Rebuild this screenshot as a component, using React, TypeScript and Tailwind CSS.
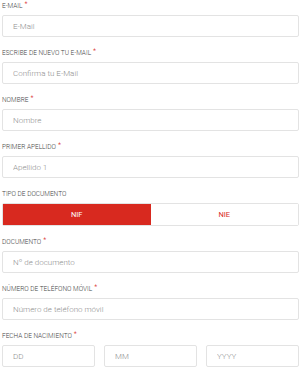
import React from "react";

const font = { fontFamily: "Roboto, 'Liberation Sans', sans-serif" };

function Label({ text, required = true }: { text: string; required?: boolean }) {
  return (
    <div className="flex h-[12px] items-center text-[6.5px] font-light uppercase leading-none text-[#444]">
      <span>{text}</span>
      {required && <span className="ml-[2px] -mt-[3px] text-[7px] text-[#d8291f]">*</span>}
    </div>
  );
}

function Input({ placeholder }: { placeholder: string }) {
  return (
    <input
      placeholder={placeholder}
      className="h-[22px] w-full min-w-0 rounded-[2px] border border-[#e3e3e3] bg-white pl-[10px] text-[8px] font-light text-[#333] outline-none placeholder:text-[#8f8f8f]"
      style={font}
    />
  );
}

function Field({ label, placeholder }: { label: string; placeholder: string }) {
  return (
    <div className="flex flex-col gap-[3px] pb-[10px]">
      <Label text={label} />
      <Input placeholder={placeholder} />
    </div>
  );
}

export default function App() {
  return (
    <div className="h-[374px] w-[300px] overflow-hidden bg-white pl-[2px] pr-[1px]" style={font}>
      <Field label="E-Mail" placeholder="E-Mail" />
      <Field label="Escribe de nuevo tu E-Mail" placeholder="Confirma tu E-Mail" />
      <Field label="Nombre" placeholder="Nombre" />
      <Field label="Primer apellido" placeholder="Apellido 1" />

      <div className="flex flex-col gap-[3px] pb-[10px]">
        <Label text="Tipo de documento" required={false} />
        <div className="grid h-[23px] grid-cols-2 rounded-[2px] border border-[#e3e3e3] text-[7.5px]">
          <button className="flex items-center justify-center bg-[#d8291f] text-white">NIF</button>
          <button className="flex items-center justify-center bg-white text-[#d8291f]">NIE</button>
        </div>
      </div>

      <Field label="Documento" placeholder="Nº de documento" />
      <Field label="Número de teléfono móvil" placeholder="Número de teléfono móvil" />

      <div className="flex flex-col gap-[3px]">
        <Label text="Fecha de nacimiento" />
        <div className="grid grid-cols-[93px_93px_1fr] gap-[9px]">
          <Input placeholder="DD" />
          <Input placeholder="MM" />
          <Input placeholder="YYYY" />
        </div>
      </div>
    </div>
  );
}
